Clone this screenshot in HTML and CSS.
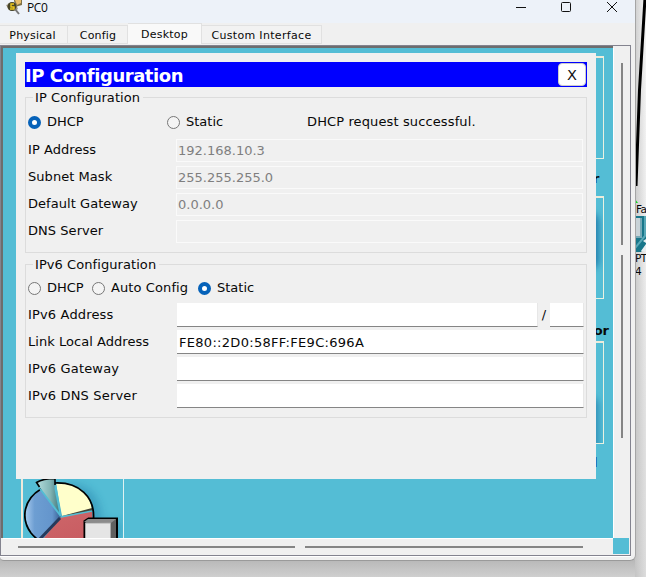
FILE: index.html
```html
<!DOCTYPE html>
<html lang="en">
<head>
<meta charset="utf-8">
<title>PC0</title>
<link rel="stylesheet" href="styles.css">
</head>
<body>
<div class="workspace">
  <svg class="cable" width="11" height="280" viewBox="0 0 11 280"><path d="M10 -2L4.500 90 1 186" fill="none" stroke="#000" stroke-width="3"/><path d="M0 199l3 4H0z" fill="#14dd22"/></svg>
  <div class="port port-top">Fa</div>
  <svg class="device" width="11" height="36" viewBox="0 0 11 36"><path d="M0 0h11v29L6 36H0z" fill="#18768a"/><path d="M0 2h5v18H0z" fill="#c8d2d7"/><path d="M5 2h2v20H0v-2h5z" fill="#76a9b6"/><path d="M10 0v20L0 32" stroke="#59a8b7" stroke-width="2" fill="none"/><path d="M6 35l5-7v7zM8 25l3-2v4z" fill="#e8eef0"/></svg>
  <div class="port port-name">PT</div>
  <div class="port port-num">4</div>
</div>
<div class="window">
  <header class="titlebar">
    <svg class="app-icon" width="18" height="15" viewBox="0 0 18 15"><path d="M8 0h8v5l-7 2z" fill="#7c7048"/><path d="M9 0h6v3l-4 2z" fill="#e8bd69"/><path d="M0 5l9-3 3 7-3 2-6-1z" fill="#a5998a"/><circle cx="6" cy="6.500" r="4.500" fill="#464427"/><path d="M8 4H5v3h3v2H4" fill="none" stroke="#efc81d" stroke-width="1.400"/><path d="M9 9l4 5" stroke="#777" stroke-width="2"/></svg>
    <span class="title">PC0</span>
    <svg class="controls" width="106" height="14" viewBox="0 0 106 14" fill="none" stroke="#111" stroke-width="1"><path d="M0 7.500h10M45.500 3.500q0-1 1-1h7q1 0 1 1v7q0 1-1 1h-7q-1 0-1-1zM91 2l10 10M101 2L91 12"/></svg>
  </header>
  <nav class="tabs">
    <div class="tab physical">Physical</div>
    <div class="tab config">Config</div>
    <div class="tab active">Desktop</div>
    <div class="tab custom">Custom Interface</div>
  </nav>
  <main class="frame">
    <section class="desktop">
      <div class="tile tile-one"></div><b class="app-name name-one">r</b>
      <div class="tile tile-two"><i class="glow"></i></div><b class="app-name name-two">or</b>
      <div class="tile tile-three"><i class="glow low"></i></div><b class="app-name name-three">l</b>
      <div class="tile tile-pie">
        <svg width="100" height="60" viewBox="0 0 100 60">
          <defs>
            <linearGradient id="blue"><stop offset="0" stop-color="#a4c7ec"/><stop offset=".25" stop-color="#6d9ed2"/><stop offset=".75" stop-color="#6495cc"/><stop offset="1" stop-color="#365d91"/></linearGradient>
            <linearGradient id="red" x2=".6" y2="1"><stop offset="0" stop-color="#e0a0a2"/><stop offset=".25" stop-color="#cc6468"/><stop offset="1" stop-color="#c95d62"/></linearGradient>
            <linearGradient id="wedge"><stop offset="0" stop-color="#b3dcdc"/><stop offset=".6" stop-color="#82b5b5"/><stop offset="1" stop-color="#477d80"/></linearGradient>
            <filter id="soft" x="-30%" y="-30%" width="160%" height="160%"><feGaussianBlur stdDeviation="4"/></filter>
          </defs>
          <path d="M42 5C66 3 77 18 78 42h18v18H29z" fill="#247fa9" opacity=".45" filter="url(#soft)"/>
          <path d="M37 38L17 62Q12 60 8 54C-3 39 1 20 17 11z" fill="url(#blue)"/>
          <path d="M19 60L37 38l31-6c1 10 0 22-6 30z" fill="url(#red)"/>
          <path d="M15 61l21-22" stroke="#263a5c" stroke-width="3"/>
          <path d="M32 5C54 3 66 15 68 31l-30 6z" fill="#ffffcb"/>
          <path d="M38 37l30-8 .5 3-30 5z" fill="#454537"/>
          <path d="M17 10C0 20-4 39 7 54q4 5 9 8M31 4C55 3 71 18 69.500 40" fill="none" stroke="#000" stroke-width="1.700"/>
          <path d="M16 10l20.500 27L31.500 5M37 38l31-6" fill="none" stroke="#54bdd3" stroke-width="1.500"/>
          <path d="M13 4Q20-1 31 0l-.5 10 4.500 23L15 7z" fill="url(#wedge)"/>
          <path d="M15.500 8l-3-4.500Q19-.5 31-.5V6" fill="none" stroke="#000" stroke-width="1.600"/>
          <path d="M60.500 42l4-2.500H93v24H60.500z" fill="#686868" stroke="#000" stroke-width="2"/>
          <path d="M60 43l4-3h28v4z" fill="#8b8b8b"/><path d="M87 44l5-4v24h-5z" fill="#606060"/>
          <path d="M61.500 44h25v20h-25z" fill="#e5e5e5" stroke="#aaa"/>
        </svg>
      </div>
    </section>
    <aside class="vscroll"><i class="thumb-a"></i><i class="thumb-b"></i></aside>
    <div class="hscroll"><i class="thumb-c"></i><i class="thumb-d"></i></div>
    <div class="corner"></div>
  </main>
</div>
<section class="dialog">
  <header class="dialog-head"><h1>IP Configuration</h1><button class="close">X</button></header>
  <section class="group ipv4">
    <h2>IP Configuration</h2>
    <div class="choices">
      <label class="choice dhcp"><i class="radio on"></i>DHCP</label>
      <label class="choice static"><i class="radio"></i>Static</label>
      <span class="status">DHCP request successful.</span>
    </div>
    <div class="fields">
      <div class="row"><span>IP Address</span><div class="field off">192.168.10.3</div></div>
      <div class="row"><span>Subnet Mask</span><div class="field off">255.255.255.0</div></div>
      <div class="row"><span>Default Gateway</span><div class="field off">0.0.0.0</div></div>
      <div class="row"><span>DNS Server</span><div class="field off"></div></div>
    </div>
  </section>
  <section class="group ipv6">
    <h2>IPv6 Configuration</h2>
    <div class="choices">
      <label class="choice dhcp6"><i class="radio"></i>DHCP</label>
      <label class="choice auto"><i class="radio"></i>Auto Config</label>
      <label class="choice"><i class="radio on"></i>Static</label>
    </div>
    <div class="fields">
      <div class="row"><span>IPv6 Address</span><div class="field"></div><span class="slash">/</span><div class="field prefix"></div></div>
      <div class="row"><span class="link-label">Link Local Address</span><div class="field local">FE80::2D0:58FF:FE9C:696A</div></div>
      <div class="row"><span>IPv6 Gateway</span><div class="field"></div></div>
      <div class="row"><span>IPv6 DNS Server</span><div class="field"></div></div>
    </div>
  </section>
</section>
</body>
</html>
```
FILE: styles.css
```css
* { box-sizing: border-box; }
body { margin: 0; width: 646px; height: 577px; overflow: hidden; position: relative; color: #080808; font: 13px/16px "DejaVu Sans", sans-serif; background: linear-gradient(#b8b8b8, #cfcfcf) 0 560px / 636px 17px no-repeat, linear-gradient(90deg, #bbb 635px, #ccc 636px, #e6e6e6 646px); }
h1, h2 { margin: 0; font-size: 13px; font-weight: normal; }
svg { display: block; }
.workspace { position: absolute; left: 635px; top: 0; width: 11px; height: 577px; overflow: hidden; background: linear-gradient(90deg, rgba(180,180,180,.6), transparent), linear-gradient(#f6f6f6, #ededed 270px, #e2e2e2 430px, #ddd); }
.cable { position: absolute; top: 0; left: 0; }
.device { position: absolute; top: 216px; left: 0; }
.port { position: absolute; left: 1px; font: 10.5px/14px "DejaVu Sans", sans-serif; letter-spacing: -.6px; white-space: nowrap; }
.port-top { top: 202px; }
.port-name { top: 251px; left: 0; }
.port-num { top: 264px; left: 0; }
.window { position: relative; width: 636px; height: 561px; background: #f0f0f0; border-right: 1px solid #a5a5a5; border-bottom: 1px solid #9a9a9a; border-radius: 0 0 6px 4px; overflow: hidden; }
.titlebar { height: 23px; display: flex; background: #edf2f9; }
.app-icon { margin-left: 6px; }
.title { margin-left: 3px; width: 489px; font: 12px/15px "Open Sans", sans-serif; letter-spacing: -.35px; }
.tabs { display: flex; height: 22px; align-items: flex-end; font-size: 11px; letter-spacing: .2px; }
.tab { height: 19px; margin-bottom: 1px; border: 1px solid #e1e1e1; border-left-width: 0; line-height: 19px; text-align: center; white-space: nowrap; background: #f2f2f2; }
.physical { width: 68px; padding-right: 2px; }
.config { width: 60px; padding-left: 1px; }
.active { width: 74px; height: 21px; background: #f9f9f9; border-bottom: 0; line-height: 21px; }
.custom { width: 120px; letter-spacing: .33px; }
.frame { display: grid; grid-template: 490px 17px / 610px 17px; width: 631px; height: 511px; border: 1px solid #83838f; box-shadow: 0 1px #fff; padding-left: 2px; padding-top: 2px; background: linear-gradient(#6d6d6d, #6d6d6d) 0 0 / 612px 2px no-repeat, linear-gradient(#6d6d6d, #6d6d6d) 0 0 / 2px 492px no-repeat, #f0f0f0; }
.desktop { position: relative; overflow: hidden; background: #54bdd5; }
.tile { position: absolute; left: 499px; width: 102px; height: 103px; border: 1px solid #e9f1e1; border-top: 2px solid #eeebda; overflow: hidden; }
.tile-one { top: 8px; }
.tile-two { top: 148px; }
.tile-three { top: 293px; height: 103px; }
.tile-pie { left: 18px; top: 390px; width: 103px; border: 0; border-left: 2px solid #eee9db; border-right: 1px solid #dff2f1; }
.tile-pie svg { position: absolute; top: 41px; left: 1px; }
.glow { position: absolute; right: 4px; top: 14px; width: 40px; height: 58px; border-radius: 10px; background: #247fae; filter: blur(3px); }
.low { top: 53px; height: 60px; opacity: .7; }
.app-name { position: absolute; font-size: 13px; line-height: 16px; }
.name-one { left: 590px; top: 123px; }
.name-two { right: 4px; top: 275px; }
.name-three { left: 590px; top: 407px; color: #080a40; }
.vscroll { border-left: 1px solid #fff; padding: 15px 0 0 7px; display: flex; flex-direction: column; gap: 10px; }
.vscroll i { width: 2px; background: #858585; }
.thumb-a { height: 182px; }
.thumb-b { height: 183px; }
.hscroll { display: flex; gap: 10px; border-top: 1px solid #fff; padding: 7px 0 0 15px; }
.hscroll i { height: 2px; background: #858585; }
.thumb-c { width: 277px; }
.thumb-d { width: 278px; }
.corner { width: 16px; height: 16px; background: #54bdd5; }
.dialog { position: absolute; left: 16px; top: 53px; width: 580px; height: 426px; padding: 9px 9px 0; background: #f0f0f0; }
.dialog-head { height: 25px; display: flex; justify-content: space-between; background: #00f; color: #fff; padding-right: 1px; }
.dialog-head h1 { font: bold 18px/27px "DejaVu Sans", sans-serif; letter-spacing: -.45px; }
.close { width: 28px; height: 23px; margin: 1px 0; padding: 0; border: 1px solid #ccc; border-radius: 4px; background: #fff; font: 14.5px/20px "DejaVu Sans", sans-serif; color: #111; }
.group { width: 562px; border: 1px solid #dcdcdc; padding: 0 3px 0 2px; }
.ipv4 { height: 156px; margin-top: 10px; }
.ipv6 { height: 154px; margin-top: 11px; }
.group h2 { width: max-content; height: 16px; margin: -8px 0 0 5px; padding: 0 3px 0 2px; background: #f0f0f0; letter-spacing: .07px; }
.choices { display: flex; height: 16px; margin-top: 8px; }
.ipv6 .choices { margin-top: 7px; }
.choice { display: flex; align-items: center; gap: 6px; white-space: nowrap; }
.status { letter-spacing: .12px; }
.radio { width: 13px; height: 13px; border: 1px solid #777; border-radius: 50%; background: #f4f4f4; }
.radio.on { border: 4px solid #0662b9; background: #fff; }
.dhcp { width: 139px; }
.static { width: 140px; }
.dhcp6 { width: 64px; }
.auto { width: 106px; letter-spacing: .1px; }
.fields { display: grid; gap: 3px; margin-top: 8px; }
.ipv6 .fields { margin-top: 7px; }
.row { display: flex; height: 24px; align-items: center; }
.row > span:first-child { width: 149px; height: 17px; white-space: nowrap; letter-spacing: .05px; }
.ipv6 .row > span:first-child { letter-spacing: .16px; }
.ipv6 .row > .link-label:first-child { letter-spacing: .04px; }
.field { flex: 1; height: 24px; padding: 5px 2px 0; background: #fff; border-bottom: 1px solid #858585; border-right: 1px solid #e7e7e7; white-space: nowrap; }
.ipv6 .row .field:last-child { margin-right: -1px; }
.local { letter-spacing: .3px; }
.field.off { height: 23px; margin-left: -1px; color: #7f7f7f; background: #f0f0f0; border: 1px solid #fafafa; padding: 3px 1px 0; }
.slash { width: 12px; text-align: center; }
.prefix { flex: 0 0 34px; }
```
